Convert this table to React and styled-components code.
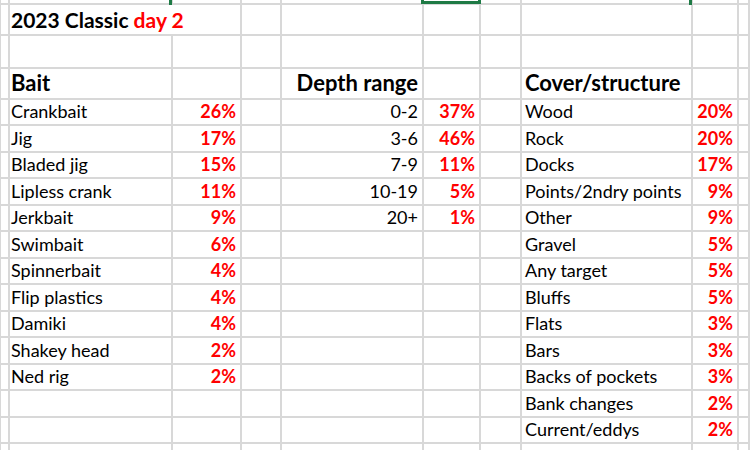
import React from 'react';
import styled, { createGlobalStyle, css } from 'styled-components';

const GlobalStyle = createGlobalStyle`
  html, body {
    margin: 0;
    padding: 0;
    background: #ffffff;
  }
  body {
    font-family: Lato, "Liberation Sans", sans-serif;
    overflow: hidden;
  }
`;

const LINE = '#d8d8d8';
const GREEN = '#1e7a45';

// column widths include the 2px gridline on the right
const COLS = '8px 165px 69px 40px 142px 57px 41px 171px 46px 1fr';
const DATA_ROWS = [26, 27, 26, 27, 26, 27, 26, 27, 26, 27, 26, 27, 26];

const Sheet = styled.div`
  display: grid;
  grid-template-columns: ${COLS};
  grid-template-rows: 5px 31px 33px 31px ${DATA_ROWS.map((h) => h + 'px').join(' ')} 20px;
  width: 750px;
  height: 450px;
  overflow: hidden;
`;

const Cell = styled.div`
  position: relative;
  box-sizing: border-box;
  border-right: 2px solid ${LINE};
  border-bottom: 2px solid ${LINE};
  display: flex;
  align-items: flex-end;
  justify-content: ${(p) => (p.$right ? 'flex-end' : 'flex-start')};
  padding: 0 4px 3px 3px;
  font-size: 18px;
  line-height: 20px;
  white-space: nowrap;
  color: #000;
  ${(p) => p.$span && css`grid-column: span ${p.$span};`}
  ${(p) => p.$edge && css`border-left: 1px solid ${LINE};`}
  ${(p) => p.$bold && css`font-weight: 700;`}
  ${(p) => p.$red && css`color: #ff0000; font-weight: 700;`}
  ${(p) => p.$head && css`font-size: 22px; line-height: 26px; padding-bottom: 2px;`}
  ${(p) => p.$title && css`font-size: 21px; line-height: 24px; font-weight: 700; padding-bottom: 2px;`}
  ${(p) =>
    p.$markLeft &&
    css`
      &::before {
        content: '';
        position: absolute;
        left: -4px;
        top: 0;
        width: 3px;
        height: 5px;
        background: ${GREEN};
      }
    `}
  ${(p) =>
    p.$selected &&
    css`
      &::after {
        content: '';
        position: absolute;
        left: -3px;
        right: -2px;
        top: -4px;
        bottom: -1px;
        border: 3px solid ${GREEN};
      }
    `}
`;

const Red = styled.span`
  color: #ff0000;
`;

const bait = [
  ['Crankbait', '26%'],
  ['Jig', '17%'],
  ['Bladed jig', '15%'],
  ['Lipless crank', '11%'],
  ['Jerkbait', '9%'],
  ['Swimbait', '6%'],
  ['Spinnerbait', '4%'],
  ['Flip plastics', '4%'],
  ['Damiki', '4%'],
  ['Shakey head', '2%'],
  ['Ned rig', '2%'],
];

const depth = [
  ['0-2', '37%'],
  ['3-6', '46%'],
  ['7-9', '11%'],
  ['10-19', '5%'],
  ['20+', '1%'],
];

const cover = [
  ['Wood', '20%'],
  ['Rock', '20%'],
  ['Docks', '17%'],
  ['Points/2ndry points', '9%'],
  ['Other', '9%'],
  ['Gravel', '5%'],
  ['Any target', '5%'],
  ['Bluffs', '5%'],
  ['Flats', '3%'],
  ['Bars', '3%'],
  ['Backs of pockets', '3%'],
  ['Bank changes', '2%'],
  ['Current/eddys', '2%'],
];

const pick = (list, i) => list[i] || ['', ''];

const App = () => {
  const rows = [];
  DATA_ROWS.forEach((_, i) => {
    const b = pick(bait, i);
    const d = pick(depth, i);
    const c = pick(cover, i);
    rows.push(
      <Cell key={'a' + i} $edge />,
      <Cell key={'b' + i}>{b[0]}</Cell>,
      <Cell key={'c' + i} $right $red>{b[1]}</Cell>,
      <Cell key={'d' + i} />,
      <Cell key={'e' + i} $right>{d[0]}</Cell>,
      <Cell key={'f' + i} $right $red>{d[1]}</Cell>,
      <Cell key={'g' + i} />,
      <Cell key={'h' + i}>{c[0]}</Cell>,
      <Cell key={'i' + i} $right $red>{c[1]}</Cell>,
      <Cell key={'j' + i} />
    );
  });

  return (
    <>
      <GlobalStyle />
      <Sheet>
        {/* partial row above, with the selection marks */}
        <Cell $edge />
        <Cell />
        <Cell $markLeft />
        <Cell />
        <Cell />
        <Cell $selected />
        <Cell />
        <Cell />
        <Cell $markLeft />
        <Cell />

        {/* title */}
        <Cell $edge />
        <Cell $span={2} $title>
          2023 Classic&nbsp;<Red>day 2</Red>
        </Cell>
        <Cell />
        <Cell />
        <Cell />
        <Cell />
        <Cell />
        <Cell />
        <Cell />

        {/* blank */}
        <Cell $edge />
        <Cell />
        <Cell />
        <Cell />
        <Cell />
        <Cell />
        <Cell />
        <Cell />
        <Cell />
        <Cell />

        {/* headers */}
        <Cell $edge />
        <Cell $head $bold>Bait</Cell>
        <Cell />
        <Cell />
        <Cell $head $bold $right>Depth range</Cell>
        <Cell />
        <Cell />
        <Cell $head $bold>Cover/structure</Cell>
        <Cell />
        <Cell />

        {rows}

        {/* partial row below */}
        <Cell $edge />
        <Cell />
        <Cell />
        <Cell />
        <Cell />
        <Cell />
        <Cell />
        <Cell />
        <Cell />
        <Cell />
      </Sheet>
    </>
  );
};

export default App;
